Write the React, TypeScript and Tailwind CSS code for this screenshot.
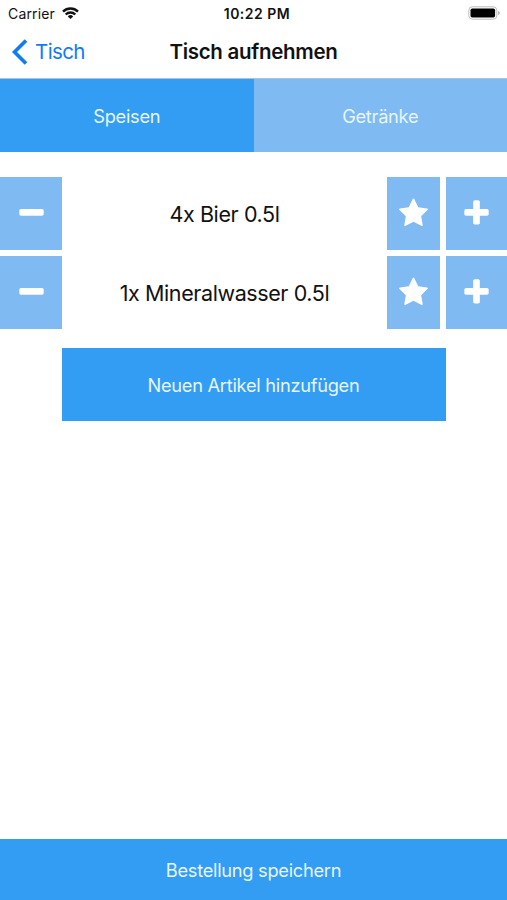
const ICONS = {
  minus:
    'M1600 736v192q0 40-28 68t-68 28h-1216q-40 0-68-28t-28-68v-192q0-40 28-68t68-28h1216q40 0 68 28t28 68z',
  plus: 'M1600 736v192q0 40-28 68t-68 28h-416v416q0 40-28 68t-68 28h-192q-40 0-68-28t-28-68v-416h-416q-40 0-68-28t-28-68v-192q0-40 28-68t68-28h416v-416q0-40 28-68t68-28h192q40 0 68 28t28 68v416h416q40 0 68 28t28 68z',
  star: 'M1728 647q0 22-26 48l-363 354 86 500q1 7 1 20 0 21-10.5 35.5t-30.5 14.5q-19 0-40-12l-449-236-449 236q-22 12-40 12-21 0-31.5-14.5t-10.5-35.5q0-6 2-20l86-500-364-354q-25-27-25-48 0-37 56-46l502-73 225-455q19-41 49-41t49 41l225 455 502 73q56 9 56 46z',
};

const items = [
  { id: 1, amount: 4, name: 'Bier 0.5l' },
  { id: 2, amount: 1, name: 'Mineralwasser 0.5l' },
];

type IconButtonProps = {
  icon: keyof typeof ICONS;
  label: string;
  className: string;
};

const IconButton = ({ icon, label, className }: IconButtonProps) => (
  <button
    aria-label={label}
    className={`flex shrink-0 items-center justify-center bg-[#7fbaf3] text-white ${className}`}
  >
    <svg viewBox="0 0 1792 1792" fill="currentColor" className="size-[31px]">
      <path d={ICONS[icon]} />
    </svg>
  </button>
);

const StatusBar = () => (
  <div className="grid h-7 grid-cols-3 items-center pr-[7px] pl-2 text-[#111]">
    <div className="flex items-center gap-[7px] pb-0.5 text-[14px] tracking-[0.15px]">
      Carrier
      <svg viewBox="0 0 17 12" className="h-3 w-[17px]">
        <g fill="none" stroke="currentColor" strokeWidth="2.4">
          <path d="M1 4.6a10.8 10.8 0 0 1 15 0" />
          <path d="M3.7 7.5a6.9 6.9 0 0 1 9.6 0" />
        </g>
        <path d="M5.8 9.4a3.9 3.9 0 0 1 5.4 0L8.5 12z" fill="currentColor" />
      </svg>
    </div>
    <div className="pb-0.5 pl-1.5 text-center text-[14px] font-semibold whitespace-nowrap tracking-[0.5px]">
      10:22 PM
    </div>
    <svg viewBox="0 0 32 14" className="h-3.5 w-8 -translate-y-px justify-self-end">
      <rect x="0.8" y="0.8" width="28" height="12.4" rx="3.6" fill="white" stroke="#bcbcbc" />
      <rect x="2.5" y="2.5" width="24.6" height="9" rx="1.8" fill="black" />
      <path d="M30.2 5v4q1.5-.7 1.5-2t-1.5-2z" fill="#a6a6a6" />
    </svg>
  </div>
);

const App = () => {
  return (
    <div className="flex h-screen w-full flex-col bg-white font-['Inter','Liberation_Sans',sans-serif]">
      <header className="h-[79px] shrink-0 border-b border-[#a9c4dc]">
        <StatusBar />
        <div className="grid h-12 grid-cols-[1fr_auto_1fr] items-center">
          <button className="flex items-center gap-[7px] pl-3 text-[20.5px] tracking-[-0.6px] text-[#0f7cf6]">
            <svg viewBox="0 0 16 26" className="h-[26px] w-4">
              <path d="M14 1.5 2.5 13 14 24.5" fill="none" stroke="currentColor" strokeWidth="3.6" />
            </svg>
            Tisch
          </button>
          <h1 className="text-[20.5px] font-semibold tracking-[-0.28px] text-[#111]">
            Tisch aufnehmen
          </h1>
        </div>
      </header>

      <nav className="grid h-[73px] shrink-0 grid-cols-2 text-[18.25px] tracking-[-0.28px] text-[#e6f6ff]">
        <button className="bg-[#339df4] pt-0.5">Speisen</button>
        <button className="bg-[#7fbaf3] pt-0.5">Getränke</button>
      </nav>

      <main className="flex-1 pt-[25px]">
        <ul className="flex flex-col gap-1.5">
          {items.map((item) => (
            <li key={item.id} className="flex h-[73px]">
              <IconButton icon="minus" label="Weniger" className="w-[62px]" />
              <span className="flex flex-1 items-center justify-center pt-0.5 text-[21.5px] tracking-[-0.4px] whitespace-pre text-[#111]">
                {`${item.amount}x ${item.name}`}
              </span>
              <IconButton icon="star" label="Favorit" className="w-[53px]" />
              <IconButton icon="plus" label="Mehr" className="ml-1.5 w-[61px]" />
            </li>
          ))}
        </ul>
        <button className="mx-auto mt-[19px] block h-[73px] w-96 bg-[#339df4] pt-0.5 text-[18.25px] tracking-[-0.28px] text-[#e6f6ff]">
          Neuen Artikel hinzufügen
        </button>
      </main>

      <button className="h-[61px] shrink-0 bg-[#339df4] pt-0.5 text-[18.25px] tracking-[-0.28px] text-[#e6f6ff]">
        Bestellung speichern
      </button>
    </div>
  );
};
export default App;
